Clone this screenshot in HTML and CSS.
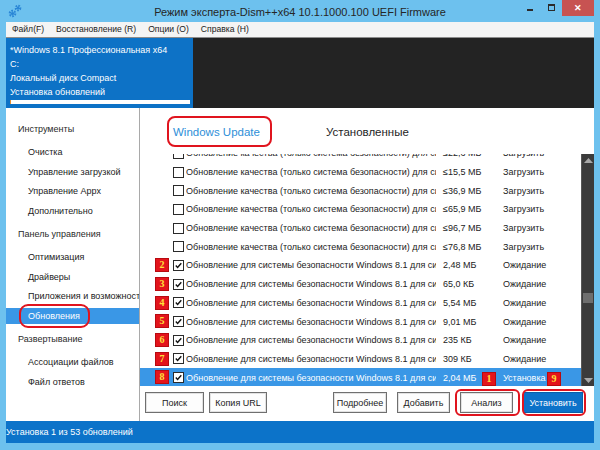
FILE: index.html
```html
<!DOCTYPE html>
<html lang="ru">
<head>
<meta charset="utf-8">
<title>Dism++</title>
<link rel="stylesheet" href="styles.css">
</head>
<body>
<div class="window">
  <div class="titlebar">
    <div class="t-left">
      <svg class="appicon" width="14" height="14" viewBox="0 0 14 14">
        <circle cx="4.5" cy="9.5" r="2.6" fill="none" stroke="#2a86d6" stroke-width="2.4" stroke-dasharray="1.6 1.1"/>
        <circle cx="4.5" cy="9.5" r="1.6" fill="#2a86d6"/>
        <circle cx="10" cy="4" r="2.2" fill="none" stroke="#2a86d6" stroke-width="2.2" stroke-dasharray="1.4 1"/>
        <circle cx="10" cy="4" r="1.3" fill="#2a86d6"/>
      </svg>
    </div>
    <div class="t-title">Режим эксперта-Dism++x64 10.1.1000.100 UEFI Firmware</div>
    <div class="t-right">
      <div class="ctl ctl-min"><span class="minline"></span></div>
      <div class="ctl ctl-max"><span class="maxbox"></span></div>
      <div class="ctl ctl-close">✕</div>
    </div>
  </div>
  <div class="menubar">
    <span class="menu-item">Файл(F)</span>
    <span class="menu-item">Восстановление (R)</span>
    <span class="menu-item">Опции (O)</span>
    <span class="menu-item">Справка (H)</span>
  </div>
  <div class="header">
    <div class="info">
      <div class="info-line">*Windows 8.1 Профессиональная x64</div>
      <div class="info-line">C:</div>
      <div class="info-line">Локальный диск Compact</div>
      <div class="info-line">Установка обновлений</div>
      <div class="progress"><span class="progress-fill"></span></div>
    </div>
    <div class="dark"></div>
  </div>
  <div class="main">
    <div class="sidebar">
      <div class="sb-head first">Инструменты</div>
      <div class="sb-item">Очистка</div>
      <div class="sb-item">Управление загрузкой</div>
      <div class="sb-item">Управление Appx</div>
      <div class="sb-item">Дополнительно</div>
      <div class="sb-head">Панель управления</div>
      <div class="sb-item">Оптимизация</div>
      <div class="sb-item">Драйверы</div>
      <div class="sb-item">Приложения и возможности</div>
      <div class="sb-item selected"><span class="mark-oval">Обновления</span></div>
      <div class="sb-head">Развертывание</div>
      <div class="sb-item">Ассоциации файлов</div>
      <div class="sb-item">Файл ответов</div>
    </div>
    <div class="content">
      <div class="tabs">
        <div class="tab tab-active"><span class="tab-label">Windows Update</span></div>
        <div class="tab">Установленные</div>
      </div>
      <div class="list">
        <div class="rows">
          <div class="row"><span class="gutter"></span><span class="cb"></span><span class="name">Обновление качества (только система безопасности) для си</span><span class="size">≤22,6 МБ</span><span class="status">Загрузить</span></div>
          <div class="row"><span class="gutter"></span><span class="cb"></span><span class="name">Обновление качества (только система безопасности) для си</span><span class="size">≤15,5 МБ</span><span class="status">Загрузить</span></div>
          <div class="row"><span class="gutter"></span><span class="cb"></span><span class="name">Обновление качества (только система безопасности) для си</span><span class="size">≤36,9 МБ</span><span class="status">Загрузить</span></div>
          <div class="row"><span class="gutter"></span><span class="cb"></span><span class="name">Обновление качества (только система безопасности) для си</span><span class="size">≤65,9 МБ</span><span class="status">Загрузить</span></div>
          <div class="row"><span class="gutter"></span><span class="cb"></span><span class="name">Обновление качества (только система безопасности) для си</span><span class="size">≤96,7 МБ</span><span class="status">Загрузить</span></div>
          <div class="row"><span class="gutter"></span><span class="cb"></span><span class="name">Обновление качества (только система безопасности) для си</span><span class="size">≤76,8 МБ</span><span class="status">Загрузить</span></div>
          <div class="row"><span class="gutter"><span class="badge">2</span></span><span class="cb checked"><svg viewBox="0 0 11 11"><path d="M2.2 5.6 L4.4 7.9 L8.9 2.8"/></svg></span><span class="name">Обновление для системы безопасности Windows 8.1 для систем</span><span class="size">2,48 МБ</span><span class="status">Ожидание</span></div>
          <div class="row"><span class="gutter"><span class="badge">3</span></span><span class="cb checked"><svg viewBox="0 0 11 11"><path d="M2.2 5.6 L4.4 7.9 L8.9 2.8"/></svg></span><span class="name">Обновление для системы безопасности Windows 8.1 для систем</span><span class="size">65,0 КБ</span><span class="status">Ожидание</span></div>
          <div class="row"><span class="gutter"><span class="badge">4</span></span><span class="cb checked"><svg viewBox="0 0 11 11"><path d="M2.2 5.6 L4.4 7.9 L8.9 2.8"/></svg></span><span class="name">Обновление для системы безопасности Windows 8.1 для систем</span><span class="size">5,54 МБ</span><span class="status">Ожидание</span></div>
          <div class="row"><span class="gutter"><span class="badge">5</span></span><span class="cb checked"><svg viewBox="0 0 11 11"><path d="M2.2 5.6 L4.4 7.9 L8.9 2.8"/></svg></span><span class="name">Обновление для системы безопасности Windows 8.1 для систем</span><span class="size">9,01 МБ</span><span class="status">Ожидание</span></div>
          <div class="row"><span class="gutter"><span class="badge">6</span></span><span class="cb checked"><svg viewBox="0 0 11 11"><path d="M2.2 5.6 L4.4 7.9 L8.9 2.8"/></svg></span><span class="name">Обновление для системы безопасности Windows 8.1 для систем</span><span class="size">235 КБ</span><span class="status">Ожидание</span></div>
          <div class="row"><span class="gutter"><span class="badge">7</span></span><span class="cb checked"><svg viewBox="0 0 11 11"><path d="M2.2 5.6 L4.4 7.9 L8.9 2.8"/></svg></span><span class="name">Обновление для системы безопасности Windows 8.1 для систем</span><span class="size">309 КБ</span><span class="status">Ожидание</span></div>
          <div class="row row-sel"><span class="gutter"><span class="badge">8</span></span><span class="cb checked"><svg viewBox="0 0 11 11"><path d="M2.2 5.6 L4.4 7.9 L8.9 2.8"/></svg></span><span class="name">Обновление для системы безопасности Windows 8.1 для систем</span><span class="size">2,04 МБ</span><span class="status">Установка</span></div>
        </div>
        <div class="scrollbar">
          <div class="sb-arrow"><svg width="9" height="5" viewBox="0 0 9 5"><path d="M0 5 L4.5 0 L9 5Z" fill="#a8a8a8"/></svg></div>
          <div class="sb-track"><div class="sb-thumb"></div></div>
          <div class="sb-arrow"><svg width="9" height="5" viewBox="0 0 9 5"><path d="M0 0 L4.5 5 L9 0Z" fill="#a8a8a8"/></svg></div>
        </div>
      </div>
      <div class="buttons">
        <div class="btn-group left">
          <span class="btn w59">Поиск</span>
          <span class="btn w58">Копия URL</span>
        </div>
        <div class="btn-group right">
          <span class="btn w54">Подробнее</span>
          <span class="btn w53">Добавить</span>
          <span class="btn w53 mark-a">Анализ</span>
          <span class="btn btn-primary w60 mark-b">Установить</span>
        </div>
        <span class="badge badge-1">1</span>
        <span class="badge badge-9">9</span>
      </div>
    </div>
  </div>
  <div class="statusbar">Установка 1 из 53 обновлений</div>
</div>
</body>
</html>
```
FILE: styles.css
```css
html, body {
  margin: 0;
  padding: 0;
}
body {
  width: 600px;
  height: 450px;
  overflow: hidden;
  background: #6dc1ee;
  font-family: "Segoe UI", "Liberation Sans", Arial, sans-serif;
  font-size: 9px;
  color: #1e1e1e;
}
.window {
  display: flex;
  flex-direction: column;
  height: 450px;
  padding: 0 6px 7px;
  box-sizing: border-box;
}

/* title bar */
.titlebar {
  height: 22px;
  display: grid;
  grid-template-columns: 1fr auto 1fr;
  align-items: start;
  flex: none;
}
.t-left {
  padding: 4px 0 0 2px;
}
.appicon { display: block; }
.t-title {
  font-size: 11px;
  color: #262626;
  line-height: 14px;
  padding-top: 5px;
  white-space: nowrap;
}
.t-right {
  display: flex;
  justify-content: flex-end;
}
.ctl {
  height: 16px;
  display: flex;
  align-items: center;
  justify-content: center;
}
.ctl-min { width: 20px; }
.ctl-max { width: 22px; }
.ctl-close {
  width: 32px;
  background: #c75352;
  color: #fff;
  font-size: 9px;
  font-weight: bold;
}
.minline {
  display: block;
  width: 6px;
  height: 2px;
  background: #2b2b2b;
  margin-top: 4px;
}
.maxbox {
  display: block;
  width: 5px;
  height: 4px;
  border: 1px solid #2b2b2b;
  border-top-width: 2px;
  margin-top: -2px;
}

/* menu */
.menubar {
  height: 15px;
  background: #f4f4f4;
  border-bottom: 1px solid #8c8c8c;
  display: flex;
  align-items: center;
  flex: none;
  font-size: 8.6px;
}
.menu-item {
  padding: 0 6px;
  color: #222;
  line-height: 15px;
}

/* header */
.header {
  height: 70px;
  display: flex;
  flex: none;
}
.info {
  width: 187px;
  background: #0d72c6;
  color: #fff;
  padding: 5px 0 0 4px;
  box-sizing: border-box;
}
.info-line {
  line-height: 14px;
  white-space: nowrap;
}
.progress {
  margin-top: 1px;
  width: 180px;
  height: 4px;
  background: #fff;
  display: flex;
}
.progress-fill {
  width: 1px;
  background: #e89030;
}
.dark {
  flex: 1;
  background: #232323;
}

/* main */
.main {
  flex: 1;
  display: flex;
  min-height: 0;
  background: #fff;
}
.sidebar {
  width: 133px;
  border-right: 1px solid #a9a9a9;
  display: flex;
  flex-direction: column;
  gap: 3.5px;
  padding-top: 13px;
  box-sizing: content-box;
  overflow: hidden;
}
.sb-head, .sb-item {
  height: 16px;
  line-height: 16px;
  white-space: nowrap;
  overflow: hidden;
}
.sb-head {
  padding-left: 12px;
  margin: 4px 0 3.5px;
  color: #2a2a2a;
}
.sb-head.first { margin-top: 0; }
.sb-item {
  padding-left: 22px;
  color: #222;
}
.sb-item.selected {
  background: #3a97e6;
  color: #fff;
  overflow: visible;
}
.mark-oval {
  position: relative;
}
.mark-oval::after {
  content: "";
  position: absolute;
  left: -9px;
  right: -10px;
  top: -7px;
  bottom: -7px;
  border: 2px solid #e0141e;
  border-radius: 9px;
}

/* content */
.content {
  flex: 1;
  display: flex;
  flex-direction: column;
  min-width: 0;
  position: relative;
}
.tabs {
  height: 46px;
  display: flex;
  align-items: center;
  padding-top: 2px;
  box-sizing: border-box;
  font-size: 11.5px;
  flex: none;
}
.tab {
  color: #1e1e1e;
  white-space: nowrap;
}
.tab-active {
  margin-left: 33px;
  width: 153px;
  color: #2e8fd8;
}
.tab-label {
  position: relative;
}
.tab-label::after {
  content: "";
  position: absolute;
  left: -6px;
  right: -12px;
  top: -10px;
  bottom: -9px;
  border: 2px solid #e0141e;
  border-radius: 8px;
}

.list {
  height: 232px;
  display: flex;
  flex: none;
  overflow: hidden;
}
.rows {
  flex: 1;
  margin-top: -10px;
  min-width: 0;
}
.row {
  position: relative;
  height: 18.7px;
  display: grid;
  grid-template-columns: 33px 13px 257px 60px 1fr;
  align-items: center;
  white-space: nowrap;
  color: #222;
}
.gutter {
  display: block;
  height: 1px;
}
.row .name {
  width: 250px;
  overflow: hidden;
}
.row-sel {
  background: #3a97e6;
  color: #fff;
}
.cb {
  width: 11px;
  height: 11px;
  border: 1px solid #2a2a2a;
  background: #fff;
  box-sizing: border-box;
  display: block;
}
.cb svg {
  display: block;
  width: 9px;
  height: 9px;
  fill: none;
  stroke: #111;
  stroke-width: 1.7;
}
.badge {
  position: absolute;
  width: 14px;
  height: 14px;
  background: #e3141c;
  border: 1px solid #b80a10;
  box-sizing: border-box;
  color: #ffe23a;
  font-weight: bold;
  font-size: 10px;
  line-height: 12px;
  text-align: center;
  font-family: "Liberation Serif", serif;
}
.row .badge {
  left: 15px;
  top: 2px;
}

.scrollbar {
  width: 13px;
  background: #3b3b3b;
  border-left: 1px solid #575757;
  box-sizing: border-box;
  display: flex;
  flex-direction: column;
  flex: none;
}
.sb-arrow {
  height: 12px;
  display: flex;
  align-items: center;
  justify-content: center;
}
.sb-track {
  flex: 1;
}
.sb-thumb {
  margin: 127px 1px 0;
  height: 10px;
  background: #6e6e6e;
}

.buttons {
  flex: 1;
  display: flex;
  justify-content: space-between;
  padding: 6px 11px 0 5px;
  position: relative;
}
.btn-group {
  display: flex;
  align-items: flex-start;
}
.btn-group.left { gap: 5px; }
.btn-group.right { gap: 10px; }
.btn {
  height: 21px;
  box-sizing: border-box;
  border: 1px solid #6f6f6f;
  box-shadow: inset 0 0 0 1px #e2e2e2;
  background: #fdfdfd;
  display: flex;
  align-items: center;
  justify-content: center;
  color: #222;
  position: relative;
}
.btn-primary {
  background: #0c72c9;
  border-color: #0a5ea8;
  box-shadow: none;
  color: #fff;
}
.w59 { width: 59px; }
.w58 { width: 58px; }
.w54 { width: 54px; }
.w53 { width: 53px; }
.w60 { width: 60px; }
.mark-a::after, .mark-b::after {
  content: "";
  position: absolute;
  top: -4px;
  bottom: -4px;
  border: 2px solid #e0141e;
  border-radius: 6px;
}
.mark-a::after { left: -6px; right: -8px; }
.mark-b::after { left: -2px; right: -4px; }
.badge-1 { left: 342px; top: -14px; }
.badge-9 { left: 407px; top: -14px; }

.statusbar {
  height: 22px;
  background: #0c73c9;
  color: #fff;
  line-height: 22px;
  flex: none;
}
```
